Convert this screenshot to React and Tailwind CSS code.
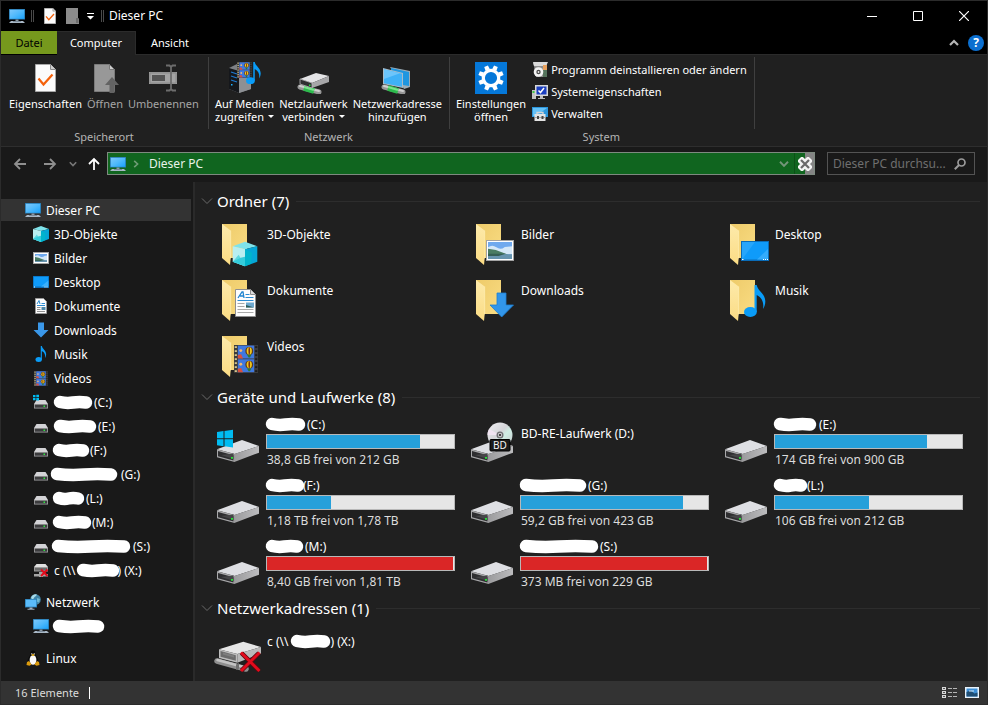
import React from 'react';

/* ---------- small shared glyphs ---------- */

function PcIcon({ size = 16 }) {
  return (
    <svg width={size} height={size} viewBox="0 0 16 16" className="shrink-0" aria-hidden="true">
      <defs>
        <linearGradient id="pcg" x1="0" y1="0" x2="1" y2="1">
          <stop offset="0" stopColor="#7cc8fb" />
          <stop offset="0.5" stopColor="#4fb9fb" />
          <stop offset="1" stopColor="#1aa2fb" />
        </linearGradient>
      </defs>
      <rect x="0" y="1" width="16" height="10.5" fill="#2679b0" />
      <rect x="0.8" y="1.8" width="14.4" height="9" fill="url(#pcg)" />
      <path d="M6.5 11.5h3v1.5h-3z" fill="#8a99a6" />
      <path d="M2 13h12l2 2H0z" fill="#a9b8c6" />
      <path d="M4 13h8v.8H4z" fill="#6c7c8c" />
    </svg>
  );
}

function Triangle({ className = '' }) {
  return (
    <svg width="6" height="3" viewBox="0 0 6 3" className={className} aria-hidden="true">
      <path d="M0 0h6L3 3z" fill="currentColor" />
    </svg>
  );
}

function PageCheck({ width, height }) {
  return (
    <svg width={width} height={height} viewBox="0 0 21 28" aria-hidden="true">
      <path d="M0.5 0.5h15l5 5v22h-20z" fill="#fbfbfb" stroke="#a8a8a8" />
      <path d="M15.500 0.5v5h5" fill="#d0d0d0" stroke="#8c8c8c" />
      <path d="M3.500 14.500l5 6L17.500 10.500" fill="none" stroke="#f4610b" strokeWidth="2.200" />
    </svg>
  );
}

function CubeShape() {
  return (
    <g>
      <path d="M0 4.500L12.300 0l12.300 4.500-12.300 3z" fill="#7fe3ea" />
      <path d="M0 4.500l12.300 3V24.500L0 20z" fill="#b9eef0" />
      <path d="M0 20l6-7 6.300 11.500z" fill="#5fd8e0" />
      <path d="M24.600 4.500l-12.300 3V24.500l12.300-4.500z" fill="#05a6d6" />
      <path d="M12.300 24.500l-12.300-4.500 8-4 4.300-1z" fill="#35ccdb" />
      <path d="M12.300 7.500l7 3.500-1 11-6 2.500z" fill="#00b4cc" />
    </g>
  );
}

function PhotoShape({ w, h, b = 1 }) {
  return (
    <g>
      <rect width={w} height={h} fill="#a3a3a3" />
      <rect x={b} y={b} width={w - 2 * b} height={h - 2 * b} fill="#fff" />
      <rect x={2 * b} y={2 * b} width={w - 4 * b} height={h - 4 * b} fill="#6fa9ee" />
      <path
        d={`M${2 * b} ${h * 0.35} q${w * 0.15} ${-h * 0.15} ${w * 0.3} 0 t${w * 0.3} ${-h * 0.02} L${w - 2 * b} ${h * 0.3} V${h * 0.68} H${2 * b}z`}
        fill="#d5e8f8"
      />
      <path d={`M${2 * b} ${h * 0.42} L${w * 0.35} ${h * 0.48} L${w * 0.8} ${h * 0.7} H${2 * b}z`} fill="#4a7c63" />
      <rect x={2 * b} y={h * 0.68} width={w - 4 * b} height={h * 0.32 - 2 * b} fill="#6794ae" />
      <path d={`M${2 * b} ${h * 0.66} H${w * 0.7} L${w * 0.45} ${h * 0.76} H${2 * b}z`} fill="#365f55" />
    </g>
  );
}

function FilmShape({ w, h }) {
  const holes = [0, 1, 2, 3, 4, 5, 6];
  const step = h / 7;
  const iw = w * 0.68;
  const ix = w * 0.16;
  return (
    <g>
      <rect width={w} height={h} fill="#3c3c3c" />
      {holes.map((i) => (
        <g key={i}>
          <rect x={w * 0.03} y={i * step + step * 0.3} width={w * 0.09} height={step * 0.45} fill="#d6c58c" />
          <rect x={w * 0.88} y={i * step + step * 0.3} width={w * 0.09} height={step * 0.45} fill="#1c1c1c" />
        </g>
      ))}
      {[h * 0.02, h * 0.51].map((y) => (
        <g key={y}>
          <rect x={ix} y={y} width={iw} height={h * 0.46} fill="#3f78e0" />
          <path d={`M${ix} ${y + h * 0.34} l${iw * 0.2} ${-h * 0.03} l${iw * 0.12} ${h * 0.15} H${ix}z`} fill="#d9503d" />
          <ellipse cx={ix + iw * 0.7} cy={y + h * 0.19} rx={iw * 0.24} ry={h * 0.14} fill="#5b3a1c" />
          <ellipse cx={ix + iw * 0.7} cy={y + h * 0.19} rx={iw * 0.16} ry={h * 0.13} fill="#f2cb1b" />
          <ellipse cx={ix + iw * 0.7} cy={y + h * 0.19} rx={iw * 0.05} ry={h * 0.13} fill="#7d3018" />
          <path d={`M${ix + iw * 0.56} ${y + h * 0.33} h${iw * 0.28} l${-iw * 0.1} ${h * 0.1} h${-iw * 0.08}z`} fill="#2c7a35" />
          <circle cx={ix + iw * 0.18} cy={y + h * 0.18} r={iw * 0.09} fill="#efb873" />
        </g>
      ))}
    </g>
  );
}

function NoteShape() {
  return (
    <g fill="#0a9cf7">
      <ellipse cx="6.400" cy="27" rx="6.400" ry="5" />
      <path d="M10.500 0h2.200c1 6 8 8 8.600 16 .1 3-1 6-2.300 8 1-6-.5-11-6.300-14v17h-2.200z" />
    </g>
  );
}

/* ---------- large tile icons (48px canvas) ---------- */

function FolderIcon({ kind }) {
  return (
    <svg width="48" height="48" viewBox="0 0 48 48" className="shrink-0" aria-hidden="true">
      <defs>
        <linearGradient id="fback" x1="0" y1="0" x2="1" y2="1">
          <stop offset="0" stopColor="#eecb6a" />
          <stop offset="1" stopColor="#f9dc83" />
        </linearGradient>
        <linearGradient id="ffront" x1="0" y1="0" x2="0" y2="1">
          <stop offset="0" stopColor="#fdeaab" />
          <stop offset="1" stopColor="#fbdc84" />
        </linearGradient>
      </defs>
      <path d="M8 4h25v34H8z" fill="url(#fback)" />
      <path d="M8 4l8.700 6.500V38L16 45l-8-7z" fill="url(#ffront)" />
      <path d="M16.700 10.500V38h-.7" fill="none" stroke="#fff1bd" strokeWidth="0.6" />
      {kind === 'cube' && (
        <g transform="translate(18.700 21.700)">
          <CubeShape />
        </g>
      )}
      {kind === 'photo' && (
        <g transform="translate(18 20)">
          <PhotoShape w={28} h={21} />
        </g>
      )}
      {kind === 'desktop' && (
        <g transform="translate(19 21)">
          <rect width="28" height="20" fill="#0a6cb8" />
          <rect x="1" y="1" width="26" height="17.500" fill="#0f9bfa" />
          <path d="M1 18.500L14 1H1z" fill="#27a6fb" />
          <path d="M16 18.500L27 8v10.500z" fill="#33abfc" />
          <path d="M1 18h1.500v1H1zM22 18h1v1h-1zM24 18h1v1h-1zM26 18h1v1h-1z" fill="#fff" />
        </g>
      )}
      {kind === 'doc' && (
        <g transform="translate(21 13)">
          <path d="M.5.5h15l5 5v22H.5z" fill="#fdfdfd" stroke="#8f8f8f" />
          <path d="M15.500.5v5h5" fill="#ddd" stroke="#8f8f8f" />
          <path d="M3 9l4-6h1l1 6M5 7h3.500" fill="none" stroke="#1d83cf" strokeWidth="1.300" />
          <path d="M10.500 5.500h4M10.500 8.500h8M2.500 11.500h16" stroke="#2c8cd2" />
          <path d="M2.500 14.500h7M2.500 17.500h7M2.500 20.500h16M2.500 23.500h16" stroke="#a9a9a9" />
          <path d="M11 13.500h8v5h-8z" fill="#6fa9cf" />
          <path d="M11 16l8 2.500h-8z" fill="#2f5d56" />
        </g>
      )}
      {kind === 'down' && (
        <path d="M29 17h9v12h7.500L33.700 41 22 29h7z" fill="#3296ea" stroke="#1c7ed0" strokeWidth="0.8" />
      )}
      {kind === 'music' && (
        <g transform="translate(22 9)">
          <NoteShape />
        </g>
      )}
      {kind === 'video' && (
        <g transform="translate(20 13)">
          <FilmShape w={24} h={28} />
        </g>
      )}
    </svg>
  );
}

function DriveIcon({ kind }) {
  return (
    <svg width="48" height="48" viewBox="0 0 48 48" className="shrink-0" aria-hidden="true">
      <defs>
        <linearGradient id="dside" x1="0" y1="0" x2="1" y2="0">
          <stop offset="0" stopColor="#9b9b9d" />
          <stop offset="1" stopColor="#bcbcbe" />
        </linearGradient>
        <linearGradient id="disc" x1="0" y1="0" x2="1" y2="1">
          <stop offset="0" stopColor="#f1f1f4" />
          <stop offset="0.45" stopColor="#d4d5d9" />
          <stop offset="0.6" stopColor="#cfeee4" />
          <stop offset="1" stopColor="#c8c8cc" />
        </linearGradient>
      </defs>
      <path d="M3 33.300L28 24l17 6-24.300 8z" fill="#dedfe3" />
      <path d="M45 30v6.700L20.300 46v-8z" fill="url(#dside)" />
      <path d="M3 33.300L20.700 38v8L3 41.300z" fill="#a8a8aa" />
      <path d="M4 35l15.500 4.300v5.200L4 40.300z" fill="#2e2e30" />
      <path d="M7 39l12.500-1.500v5.500z" fill="#454547" />
      <path d="M17 41h2v1.700h-2z" fill="#27e03a" />
      {kind === 'windows' && (
        <path
          d="M3 16l6.500-.9v7.100H3zM10.500 15l8.500-1.200v8.400h-8.500zM3 23.200h6.500v7L3 29.300zM10.500 23.200H19v8.300l-8.500-1.200z"
          fill="#00bcf2"
        />
      )}
      {kind === 'bd' && (
        <g>
          <circle cx="32" cy="19" r="12.500" fill="url(#disc)" />
          <path d="M32 19L21 13a12.500 12.500 0 0 0-1.500 6z" fill="#f0e4f2" />
          <circle cx="32" cy="19" r="3.500" fill="#6f6f73" />
          <circle cx="32" cy="19" r="2.200" fill="#c9c9cc" />
          <circle cx="32" cy="19" r="1.100" fill="#222" />
          <rect x="22" y="23.500" width="20" height="11.500" rx="1" fill="#1b1b1b" stroke="#000" />
          <text x="32" y="33" textAnchor="middle" fontSize="10" fontFamily="'Noto Sans',sans-serif" fill="#f4f4f4">
            BD
          </text>
        </g>
      )}
    </svg>
  );
}

function NetDriveBig() {
  return (
    <svg width="48" height="48" viewBox="0 0 48 48" className="shrink-0" aria-hidden="true">
      <path d="M3 34L32 42" stroke="#8f8f8f" strokeWidth="5.500" strokeLinecap="round" />
      <path d="M3.500 33l28 7.500" stroke="#c4c4c4" strokeWidth="2.500" strokeLinecap="round" />
      <path d="M5 22.300l24.300-7.600L47 20l-23.700 7z" fill="#e6e6e6" />
      <path d="M47 20v6.500l-23.700 9.200V27z" fill="#b9b9b9" />
      <path d="M5 22.300L23.300 27v8.700L5 31z" fill="#bdbdbd" />
      <path d="M6.500 24l15.300 4.200v5.600L6.500 29.800z" fill="#6c6c6c" />
      <path d="M9 25.500l11 3v2l-11-3z" fill="#7f7f7f" />
      <path d="M22 37.500l3-1.500v5.500l-3 1.500z" fill="#6f6f6f" />
      <path d="M27.500 26l17.500 17.500M45 26L27.500 43.500" stroke="#5b0a10" strokeWidth="4.500" />
      <path d="M27 25.500l18.500 18.500M45.500 25.500L27 44" stroke="#e30b1c" strokeWidth="3" />
    </svg>
  );
}

/* ---------- 16px tree icons ---------- */

function SmallIcon({ kind }) {
  if (kind === 'pc') return <PcIcon />;
  return (
    <svg width="16" height="16" viewBox="0 0 16 16" className="shrink-0" aria-hidden="true">
      {kind === 'cube' && (
        <g transform="scale(0.650)">
          <CubeShape />
        </g>
      )}
      {kind === 'photo' && (
        <g transform="translate(0 2)">
          <PhotoShape w={16} h={12} />
        </g>
      )}
      {kind === 'desktop' && (
        <g>
          <rect y="2" width="16" height="12" fill="#0a6cb8" />
          <rect x="0.700" y="2.700" width="14.600" height="9.800" fill="#0f9bfa" />
          <path d="M8 12.500l7.300-6v6z" fill="#3ab0fc" />
          <path d="M1 12.500h1v1H1zM11.500 12.500h1v1h-1zM13.500 12.500h1v1h-1z" fill="#fff" />
        </g>
      )}
      {kind === 'doc' && (
        <g>
          <path d="M2.500.5h8l3 3v12h-11z" fill="#fcfcfc" stroke="#9a9a9a" />
          <path d="M4 6l2-3.500L7 6M8.500 5.500h3.500M4 7.500h8" fill="none" stroke="#2c8cd2" />
          <path d="M4 9.500h3.500M4 11.500h3.500M4 13.500h8" stroke="#8f8f8f" />
          <path d="M8.500 9h4v3h-4z" fill="#4d87a8" />
        </g>
      )}
      {kind === 'down' && <path d="M5 0.500h6V8h4.500L8 15.500.5 8H5z" fill="#3a97e8" />}
      {kind === 'music' && (
        <g transform="translate(2.500 0) scale(0.500)">
          <NoteShape />
        </g>
      )}
      {kind === 'video' && (
        <g transform="translate(1 1)">
          <FilmShape w={14} h={15} />
        </g>
      )}
      {(kind === 'drive' || kind === 'winDrive') && (
        <g>
          <path d="M3.500 6h9L15 10H1z" fill="#d3d3d6" />
          <path d="M1 10h14v4.500H1z" fill="#a4a4a6" />
          <path d="M1.800 10.700h12.400v3H1.800z" fill="#3c3c3e" />
          <path d="M10.500 11.500h1.500V13h-1.500z" fill="#2fe83f" />
        </g>
      )}
      {kind === 'winDrive' && (
        <path d="M0 1h2.500v2.300H0zM3.300 .7H6v2.600H3.300zM0 4h2.500v2.300H0zM3.300 4H6v2.600H3.300z" fill="#00bcf2" />
      )}
      {kind === 'netDrive' && (
        <g>
          <path d="M3.500 2h9L15 5H1z" fill="#e0e0e0" />
          <path d="M1 5h14v4.500H1z" fill="#9b9b9b" />
          <path d="M2 6h12v2.500H2z" fill="#6a6a6a" />
          <path d="M1 12h14v2.500H1zM6 10h4v5H6z" fill="#a5a5a5" />
          <path d="M8 7.500l6.500 6.500M14.500 7.500L8 14" stroke="#e30b1c" strokeWidth="2" />
        </g>
      )}
      {kind === 'network' && (
        <g>
          <circle cx="10.500" cy="5.500" r="5.300" fill="#3f83a6" />
          <path d="M6 4a5.300 5.300 0 0 1 6-3.500c-1 2-2.500 2-3 3.500s-2 1.500-3 0z" fill="#a7dbe9" />
          <path d="M12 4l3 1-1 3.500-2.500-1z" fill="#6fb7cf" />
          <path d="M0 5h12v8.500H0z" fill="#2679b0" />
          <path d="M.7 5.700h10.600v7H.7z" fill="#5bbcfa" />
          <path d="M4.500 13.500h3v1.200h2v1h-7v-1h2z" fill="#9fb0bf" />
        </g>
      )}
      {kind === 'linux' && (
        <g>
          <path d="M8 .5c2 0 2.600 1.500 2.600 3.500 0 2 2.900 4 2.900 8 0 2-2.500 3-5.500 3s-5.500-1-5.500-3c0-4 2.900-6 2.900-8C5.400 2 6 .5 8 .5z" fill="#0a0a0a" />
          <ellipse cx="8" cy="10" rx="3.400" ry="4.800" fill="#fafafa" />
          <path d="M6.300 3.200h1v1.200h-1zM8.700 3.200h1v1.200h-1z" fill="#fff" />
          <path d="M6.200 4.800L8 4l1.800.8L8 6.300z" fill="#f0b414" />
          <path d="M2 12l2-1 2.600 3.500L4.500 15.800 1.500 15zM14 12l-2-1-2.600 3.500 2.100 1.300 3-.8z" fill="#dd9c0d" />
        </g>
      )}
    </svg>
  );
}

/* White marker stroke that hides a drive's name. */
function Marker({ slot, start = 0, end }) {
  const a = start + 6;
  const b = end - 6;
  const m = (a + b) / 2;
  return (
    <svg width={slot} height="16" className="shrink-0 overflow-visible" role="img" aria-label="verdeckt">
      <path
        d={`M${a} 7 Q${(a + m) / 2} 8.500 ${m} 7.500 T${b} 7.500`}
        fill="none"
        stroke="#fff"
        strokeWidth="12.500"
        strokeLinecap="round"
      />
    </svg>
  );
}

/* ---------- title bar and tabs ---------- */

function TitleBar() {
  return (
    <header className="flex h-[30px] items-center bg-black pl-2">
      <PcIcon />
      <span className="ml-[6px] h-3 w-[3px] border-x border-[#4a4a4a]" />
      <div className="flex items-center">
        <button aria-label="Eigenschaften" className="ml-[10px]">
          <PageCheck width={12} height={16} />
        </button>
        <button aria-label="Neuer Ordner" className="ml-[10px]">
          <svg width="13" height="16" viewBox="0 0 13 16" aria-hidden="true">
            <path d="M0 0h12v10l1 1v5H0z" fill="#8c8c8c" />
            <path d="M10 10h2.500v5H10z" fill="#6d6d6d" />
          </svg>
        </button>
        <button aria-label="Symbolleiste anpassen" className="ml-2 text-white">
          <svg width="7" height="7" viewBox="0 0 7 7" aria-hidden="true">
            <path d="M0 0h7v1H0zM0 3h7L3.500 6.500z" fill="currentColor" />
          </svg>
        </button>
      </div>
      <span className="ml-[7px] h-3 w-[3px] border-x border-[#4a4a4a]" />
      <h1 className="ml-[5px] flex-1 text-xs text-white">Dieser PC</h1>
      <div className="flex h-full text-white">
        <button aria-label="Minimieren" className="flex w-[46px] items-center justify-center">
          <svg width="10" height="10" aria-hidden="true">
            <path d="M0 5.500h10" stroke="currentColor" />
          </svg>
        </button>
        <button aria-label="Maximieren" className="flex w-[46px] items-center justify-center">
          <svg width="10" height="10" aria-hidden="true">
            <path d="M.5.5h9v9h-9z" fill="none" stroke="currentColor" />
          </svg>
        </button>
        <button aria-label="Schließen" className="flex w-[46px] items-center justify-center">
          <svg width="10" height="10" aria-hidden="true">
            <path d="M0 0l10 10M10 0L0 10" stroke="currentColor" strokeWidth="1.200" />
          </svg>
        </button>
      </div>
    </header>
  );
}

function Tabs() {
  return (
    <nav className="flex h-6 items-stretch bg-black text-[11px] text-white">
      <button className="mb-px w-14 bg-[#76991d] text-black">Datei</button>
      <button className="w-[79px] border-t border-r border-[#2b2b2b] bg-[#202020] pb-px">Computer</button>
      <div className="flex flex-1 items-center border-b border-[#2b2b2b]">
        <button className="px-[15px]">Ansicht</button>
        <button aria-label="Menüband minimieren" className="ml-auto">
          <svg width="10" height="7" viewBox="0 0 10 7" aria-hidden="true">
            <path d="M1 6l4-4 4 4" fill="none" stroke="#b5b5b5" strokeWidth="2.200" />
          </svg>
        </button>
        <button
          aria-label="Hilfe"
          className="mr-[3px] ml-[9px] size-4 rounded-full bg-[#0b6fd0] text-[12px] leading-4 font-bold text-white"
        >
          ?
        </button>
      </div>
    </nav>
  );
}

/* ---------- ribbon ---------- */

function RibbonButton({ icon, lines, arrow, disabled }) {
  return (
    <button disabled={disabled} className={`flex flex-col items-center ${disabled ? 'text-[#a6a6a6]' : 'text-white'}`}>
      <span className="mb-[3px] flex h-8 items-center justify-center">{icon}</span>
      {lines.map((line, i) => (
        <span key={line} className="flex items-center leading-[13px] whitespace-nowrap">
          {line}
          {arrow && i === lines.length - 1 && <Triangle className="ml-1" />}
        </span>
      ))}
    </button>
  );
}

function RibbonGroup({ title, className, children }) {
  return (
    <section className="flex">
      <div className={`flex flex-col pt-[7px] ${className}`}>
        <div className="flex h-[68px] items-start gap-[5px]">{children}</div>
        <h2 className="text-center leading-[14px] text-[#b4b4b4]">{title}</h2>
      </div>
      <span className="mt-[2px] h-[72px] w-px bg-[#3f3f3f]" />
    </section>
  );
}

const openIcon = (
  <svg width="28" height="32" viewBox="0 0 28 32" aria-hidden="true">
    <path d="M3.500 2.500h15l5 5v22h-20z" fill="#989898" stroke="#7b7b7b" />
    <path d="M18.500 2.500v5h5z" fill="#cfcfcf" stroke="#7b7b7b" />
    <path d="M21 15l7 8h-4.500v8h-5v-8H14z" fill="#636363" />
  </svg>
);

const renameIcon = (
  <svg width="28" height="32" viewBox="0 0 28 32" aria-hidden="true">
    <path d="M0 10h28v12H0z" fill="#9b9b9b" />
    <path d="M1 11h26v10H1z" fill="#a5a5a5" stroke="#8a8a8a" />
    <path d="M3 13h13v6H3z" fill="#555" />
    <path
      d="M17 3.500h3.500l1.500 1.500 1.500-1.500H27M17 28.500h3.500l1.500-1.500 1.500 1.500H27M22 5v22"
      fill="none"
      stroke="#6d6d6d"
      strokeWidth="1.800"
    />
  </svg>
);

const mediaIcon = (
  <svg width="32" height="32" viewBox="0 0 32 32" aria-hidden="true">
    <path d="M0 6l8-4 14 3v22l-12 4L0 27z" fill="#7d8084" />
    <path d="M0 6l10 3v22L0 27z" fill="#15171b" />
    <path d="M10 9l12-3v21l-12 4z" fill="#8d9094" />
    <path d="M2 10l6 2M2 14l6 2M2 18l6 2" stroke="#1e7ad0" strokeWidth="1.200" />
    <path d="M2 22h1.500v1.500H2z" fill="#20b4ff" />
    <g transform="translate(8 0)">
      <FilmShape w={15} h={16} />
    </g>
    <g transform="translate(17 0) scale(0.690)">
      <NoteShape />
    </g>
  </svg>
);

const greenPipe = (
  <g>
    <path d="M3 5l19 5" stroke="#979797" strokeWidth="5" strokeLinecap="round" />
    <path d="M3 4l19 5" stroke="#d0d0d0" strokeWidth="2" strokeLinecap="round" />
    <path d="M7 6l10 3" stroke="#2dbb4d" strokeWidth="5.500" />
    <path d="M7 5l10 3" stroke="#7be38d" strokeWidth="2" />
  </g>
);

const mapDriveIcon = (
  <svg width="32" height="32" viewBox="0 0 32 32" aria-hidden="true">
    <g transform="translate(0 20)">{greenPipe}</g>
    <path d="M3 17l16-6 13 3-17 7z" fill="#e4e4e6" />
    <path d="M32 14v6l-17 6v-5z" fill="#a6a6a8" />
    <path d="M3 17l12 4v5L3 22z" fill="#2f2f31" stroke="#b5b5b7" strokeWidth="0.800" />
    <path d="M12 22.500h1.500V24H12z" fill="#27e03a" />
  </svg>
);

const netPlaceIcon = (
  <svg width="32" height="32" viewBox="0 0 32 32" aria-hidden="true">
    <path d="M9 5l20 4v16l-6 2z" fill="#9cadb8" />
    <path d="M10 6l18 4v14l-18-3z" fill="#1e96e0" />
    <path d="M2 6l20 5v15L2 22z" fill="#a9bcc8" />
    <path d="M3 7.200l18 4.500v13L3 21.200z" fill="#3fb1f7" />
    <path d="M3 7.200l16 4L3 17z" fill="#6cc5fb" />
    <g transform="translate(0 20)">{greenPipe}</g>
  </svg>
);

const gearIcon = (
  <svg width="32" height="32" viewBox="0 0 32 32" aria-hidden="true">
    <path d="M0 0h32v32H0z" fill="#0578d9" />
    <g transform="translate(16 16)" fill="#fff">
      {[0, 45, 90, 135, 180, 225, 270, 315].map((r) => (
        <path key={r} transform={`rotate(${r + 22.5})`} d="M-2.300-8.500l.3-4.300h4l.3 4.300z" />
      ))}
    </g>
    <circle cx="16" cy="16" r="7.700" fill="none" stroke="#fff" strokeWidth="3.200" />
  </svg>
);

const systemLinks = [
  {
    label: 'Programm deinstallieren oder ändern',
    icon: (
      <g>
        <path d="M1 1h14v14H4L2 4z" fill="#8f8f8f" />
        <path d="M1 0h15l-2 4H2z" fill="#dadada" />
        <path d="M11 4h4v11h-4z" fill="#55735c" />
        <path d="M11 3h4v5h-4z" fill="#e8a05c" />
        <circle cx="6.500" cy="10" r="4.800" fill="#f3f3f3" />
        <circle cx="6.500" cy="10" r="2.200" fill="#4a4a4a" />
        <circle cx="6.500" cy="10" r="0.900" fill="#eee" />
      </g>
    ),
  },
  {
    label: 'Systemeigenschaften',
    icon: (
      <g>
        <path d="M0 6h4v9H0z" fill="#c4c4c4" />
        <path d="M.5 7h2v2h-2z" fill="#3ecb40" />
        <path d="M3 1h13v11H3z" fill="#d7d7d7" />
        <path d="M4.500 2.500h10v8h-10z" fill="#1b3fc0" />
        <path d="M6.500 6.500l2 2 3.500-4.500" fill="none" stroke="#fff" strokeWidth="1.500" />
        <path d="M8 12h3v2h2v1H6v-1h2z" fill="#bdbdbd" />
      </g>
    ),
  },
  {
    label: 'Verwalten',
    icon: (
      <g>
        <path d="M0 1h16v10H0z" fill="#2d97dd" />
        <path d="M1 2h14L4 10H1z" fill="#65c1f7" />
        <path d="M5 8V6.500h6V8" fill="none" stroke="#d4d4d4" strokeWidth="1.400" />
        <path d="M2.500 8h11v7h-11z" fill="#e3e3e3" />
        <path d="M2.500 11h11v1h-11z" fill="#a5a5a5" />
        <path d="M5 10h2v3H5zM9.500 10h2v3h-2z" fill="#454545" />
      </g>
    ),
  },
];

function Ribbon() {
  return (
    <div className="flex h-[92px] border-b border-[#2e2e2e] bg-[#202020] text-[11px]">
      <RibbonGroup title="Speicherort" className="pr-[9px] pl-2">
        <RibbonButton icon={<PageCheck width={21} height={28} />} lines={['Eigenschaften']} />
        <RibbonButton icon={openIcon} lines={['Öffnen']} disabled />
        <RibbonButton icon={renameIcon} lines={['Umbenennen']} disabled />
      </RibbonGroup>
      <RibbonGroup title="Netzwerk" className="pr-[7px] pl-[6px]">
        <RibbonButton icon={mediaIcon} lines={['Auf Medien', 'zugreifen']} arrow />
        <RibbonButton icon={mapDriveIcon} lines={['Netzlaufwerk', 'verbinden']} arrow />
        <RibbonButton icon={netPlaceIcon} lines={['Netzwerkadresse', 'hinzufügen']} />
      </RibbonGroup>
      <RibbonGroup title="System" className="pr-[7px] pl-[6px]">
        <RibbonButton icon={gearIcon} lines={['Einstellungen', 'öffnen']} />
        <div className="ml-px flex flex-col">
          {systemLinks.map((l) => (
            <button key={l.label} className="flex h-[22px] items-start gap-[3px] whitespace-nowrap text-white">
              <svg width="16" height="16" viewBox="0 0 16 16" aria-hidden="true">
                {l.icon}
              </svg>
              <span className="leading-4">{l.label}</span>
            </button>
          ))}
        </div>
      </RibbonGroup>
    </div>
  );
}

/* ---------- navigation bar ---------- */

function Arrow({ dir, color }) {
  const rotate = { left: 'rotate-0', right: 'rotate-180', up: 'rotate-90' }[dir];
  return (
    <svg width="14" height="14" viewBox="0 0 14 14" className={rotate} aria-hidden="true">
      <path d="M13 7H2M7 2L2 7l5 5" fill="none" stroke={color} strokeWidth="1.800" />
    </svg>
  );
}

function Chevron({ color = '#8a8a8a', className = '', size = 8, width = 1.6 }) {
  return (
    <svg width={size} height={size} viewBox="0 0 8 8" className={className} aria-hidden="true">
      <path d="M.8 2.200L4 5.600l3.200-3.400" fill="none" stroke={color} strokeWidth={width} />
    </svg>
  );
}

function NavBar() {
  return (
    <div className="flex h-[35px] items-center bg-[#191919] pr-3 pb-[2px] pl-3 text-xs">
      <button aria-label="Zurück">
        <Arrow dir="left" color="#8f8f8f" />
      </button>
      <button aria-label="Vorwärts" className="ml-4">
        <Arrow dir="right" color="#8f8f8f" />
      </button>
      <button aria-label="Verlauf" className="ml-3">
        <Chevron color="#777" />
      </button>
      <button aria-label="Nach oben" className="ml-[10px]">
        <Arrow dir="up" color="#fff" />
      </button>
      <div className="ml-[6px] flex h-[23px] flex-1 items-center border border-[#7e8a80] bg-[#10651f] pl-[2px]">
        <PcIcon />
        <Chevron color="#6f9c76" className="ml-[6px] -rotate-90" />
        <button className="ml-[9px] text-[#e8f3e9]">Dieser PC</button>
        <button aria-label="Vorherige Orte" className="ml-auto">
          <Chevron color="#74957a" size={10} width={1.5} />
        </button>
        <button
          aria-label="Aktualisieren abbrechen"
          className="ml-[5px] flex h-full w-5 items-center justify-center border-l border-[#0c5017] bg-linear-to-r from-[#10651f] from-50% to-[#848484] to-50%"
        >
          <svg width="14" height="14" viewBox="0 0 14 14" aria-hidden="true">
            <path d="M4 4l6 6M10 4l-6 6" stroke="#f4f4f4" strokeWidth="7" strokeLinecap="square" />
            <path d="M3 3l8 8M11 3l-8 8" stroke="#6a6a6a" strokeWidth="2.200" />
          </svg>
        </button>
      </div>
      <label className="ml-3 flex h-[23px] w-[148px] items-center border border-[#535353] bg-[#191919] pr-2 pl-[5px]">
        <input
          type="text"
          aria-label="Dieser PC durchsuchen"
          placeholder="Dieser PC durchsu..."
          className="min-w-0 flex-1 bg-transparent text-white outline-none placeholder:text-[#6f6f6f]"
        />
        <svg width="12" height="12" viewBox="0 0 12 12" className="shrink-0" aria-hidden="true">
          <circle cx="7.500" cy="4.500" r="3.500" fill="none" stroke="#9b9b9b" strokeWidth="1.700" />
          <path d="M5 7L.8 11.200" stroke="#9b9b9b" strokeWidth="2" />
        </svg>
      </label>
    </div>
  );
}

/* ---------- navigation tree ---------- */

const places = [
  ['cube', '3D-Objekte'],
  ['photo', 'Bilder'],
  ['desktop', 'Desktop'],
  ['doc', 'Dokumente'],
  ['down', 'Downloads'],
  ['music', 'Musik'],
  ['video', 'Videos'],
];

const treeDrives = [
  { kind: 'winDrive', letter: '(C:)', slot: 40, start: 0, end: 38 },
  { kind: 'drive', letter: '(E:)', slot: 44, start: 0, end: 42 },
  { kind: 'drive', letter: '(F:)', slot: 36, start: -1, end: 35 },
  { kind: 'drive', letter: '(G:)', slot: 67, start: -3, end: 63 },
  { kind: 'drive', letter: '(L:)', slot: 32, start: -1, end: 30 },
  { kind: 'drive', letter: '(M:)', slot: 38, start: -1, end: 37 },
  { kind: 'drive', letter: '(S:)', slot: 79, start: -2, end: 76 },
];

function TreeItem({ icon, level = 1, selected, children }) {
  return (
    <li className="py-px">
      <a
        href="#tree"
        aria-current={selected ? 'page' : undefined}
        className={`flex h-[22px] items-center gap-[5px] whitespace-nowrap ${level === 1 ? 'pl-6' : 'pl-8'} ${
          selected ? 'bg-[#333333]' : ''
        }`}
      >
        <SmallIcon kind={icon} />
        <span className="flex items-center pt-[2px]">{children}</span>
      </a>
    </li>
  );
}

function Sidebar() {
  return (
    <aside className="w-[194px] shrink-0 border-r-2 border-[#2a2a2a] bg-[#191919] pt-4 pr-[2px] text-xs text-white">
      <ul>
        <TreeItem icon="pc" selected>
          Dieser PC
        </TreeItem>
        {places.map(([icon, label]) => (
          <TreeItem key={label} icon={icon} level={2}>
            {label}
          </TreeItem>
        ))}
        {treeDrives.map((d) => (
          <TreeItem key={d.letter} icon={d.kind} level={2}>
            <Marker slot={d.slot} start={d.start} end={d.end} />
            {d.letter}
          </TreeItem>
        ))}
        <TreeItem icon="netDrive" level={2}>
          {'c (\\\\'}
          <Marker slot={42} start={2} end={44} />
          {') (X:)'}
        </TreeItem>
      </ul>
      <ul className="mt-2">
        <TreeItem icon="network">Netzwerk</TreeItem>
        <TreeItem icon="pc" level={2}>
          <Marker slot={52} start={-1} end={50} />
        </TreeItem>
      </ul>
      <ul className="mt-2">
        <TreeItem icon="linux">Linux</TreeItem>
      </ul>
    </aside>
  );
}

/* ---------- content ---------- */

const drives = [
  { letter: '(C:)', slot: 41, end: 39, used: 82, info: '38,8 GB frei von 212 GB', icon: 'windows' },
  { label: 'BD-RE-Laufwerk (D:)', icon: 'bd' },
  { letter: '(E:)', slot: 45, end: 42, used: 81.5, info: '174 GB frei von 900 GB' },
  { letter: '(F:)', slot: 37, end: 38, used: 34, info: '1,18 TB frei von 1,78 TB' },
  { letter: '(G:)', slot: 68, end: 66, used: 86.5, info: '59,2 GB frei von 423 GB' },
  { letter: '(L:)', slot: 33, end: 33, used: 50, info: '106 GB frei von 212 GB' },
  { letter: '(M:)', slot: 39, end: 37, used: 99.5, full: true, info: '8,40 GB frei von 1,81 TB' },
  { letter: '(S:)', slot: 80, end: 78, used: 99.5, full: true, info: '373 MB frei von 229 GB' },
];

function Section({ title, children }) {
  return (
    <section>
      <div className="mb-1 flex h-6 items-center pr-[7px] pl-[6px]">
        <svg width="12" height="8" viewBox="0 0 12 8" aria-hidden="true">
          <path d="M1 1.500l5 5 5-5" fill="none" stroke="#6a6a6a" />
        </svg>
        <h2 className="ml-1 text-[15px] leading-6 text-white">{title}</h2>
        <span className="ml-[7px] h-px flex-1 bg-[#2d2d2d]" />
      </div>
      <div className="grid grid-cols-[repeat(auto-fill,254px)] pl-[19px] text-xs">{children}</div>
    </section>
  );
}

function LabelTile({ icon, tall, children }) {
  return (
    <a href="#item" className={`flex gap-1 pt-[3px] pr-[13px] ${tall ? 'h-[61px]' : 'h-14'}`}>
      {icon}
      <span className={`flex h-4 items-center pl-px whitespace-nowrap text-white ${tall ? 'mt-[10px]' : 'mt-[7px]'}`}>
        {children}
      </span>
    </a>
  );
}

function DriveTile({ drive }) {
  return (
    <a href="#drive" className="flex h-[61px] gap-1 pt-[3px] pr-[13px]">
      <DriveIcon kind={drive.icon} />
      <span className="flex min-w-0 flex-1 flex-col">
        <span className="flex h-[18px] items-center whitespace-nowrap text-white">
          <Marker slot={drive.slot} start={0} end={drive.end} />
          {drive.letter}
        </span>
        <span
          role="progressbar"
          aria-label={`Belegt ${drive.letter}`}
          aria-valuenow={drive.used}
          className="flex h-[15px] border border-[#b8b8b8] bg-[#e6e6e6]"
        >
          <span className={drive.full ? 'bg-[#da2626]' : 'bg-[#26a0da]'} style={{ width: `${drive.used}%` }} />
        </span>
        <span className="mt-[2px] pl-px leading-[18px] whitespace-nowrap text-[#dcdcdc]">{drive.info}</span>
      </span>
    </a>
  );
}

function Content() {
  return (
    <main className="min-w-0 flex-1 bg-[#202020] pt-[7px]">
      <Section title="Ordner (7)">
        {places.map(([kind, label]) => (
          <LabelTile key={label} icon={<FolderIcon kind={kind} />}>
            {label}
          </LabelTile>
        ))}
      </Section>
      <Section title="Geräte und Laufwerke (8)">
        {drives.map((d) =>
          d.label ? (
            <LabelTile key={d.label} tall icon={<DriveIcon kind={d.icon} />}>
              {d.label}
            </LabelTile>
          ) : (
            <DriveTile key={d.letter} drive={d} />
          ),
        )}
      </Section>
      <Section title="Netzwerkadressen (1)">
        <LabelTile icon={<NetDriveBig />}>
          {'c (\\\\'}
          <Marker slot={42} start={3} end={42} />
          {') (X:)'}
        </LabelTile>
      </Section>
    </main>
  );
}

function StatusBar() {
  return (
    <footer className="flex h-[23px] items-center bg-[#333333] pr-2 pl-[14px] text-[11px] text-[#dcdcdc]">
      <span>16 Elemente</span>
      <span className="ml-[10px] h-3 w-px bg-white" />
      <button aria-label="Details" className="ml-auto">
        <svg width="15" height="11" viewBox="0 0 15 11" aria-hidden="true">
          <path d="M0 0h4v3H0zM0 4h4v3H0zM0 8h4v3H0z" fill="#d8d8d8" />
          <path d="M1 1h2v1H1zM1 5h2v1H1zM1 9h2v1H1z" fill="#555" />
          <path d="M6 1.500h4M11 1.500h4M6 5.500h4M11 5.500h4M6 9.500h4M11 9.500h4" stroke="#b5b5b5" />
        </svg>
      </button>
      <button aria-label="Große Symbole" className="ml-2">
        <svg width="14" height="11" viewBox="0 0 14 11" aria-hidden="true">
          <rect width="14" height="11" fill="#e9f3fb" />
          <rect x="1.500" y="1.500" width="11" height="8" fill="#3d8fd6" />
          <path d="M1.500 5l4-1.500 4 3 3-1v4h-11z" fill="#1f4e74" />
          <path d="M4 3.500h5v1H4z" fill="#d9ecfb" />
        </svg>
      </button>
    </footer>
  );
}

export default function App() {
  return (
    <div className="flex min-h-screen flex-col border border-[#2b2b2b] bg-[#191919] font-['Noto_Sans',sans-serif] leading-4">
      <TitleBar />
      <Tabs />
      <Ribbon />
      <NavBar />
      <div className="flex flex-1">
        <Sidebar />
        <Content />
      </div>
      <StatusBar />
    </div>
  );
}
